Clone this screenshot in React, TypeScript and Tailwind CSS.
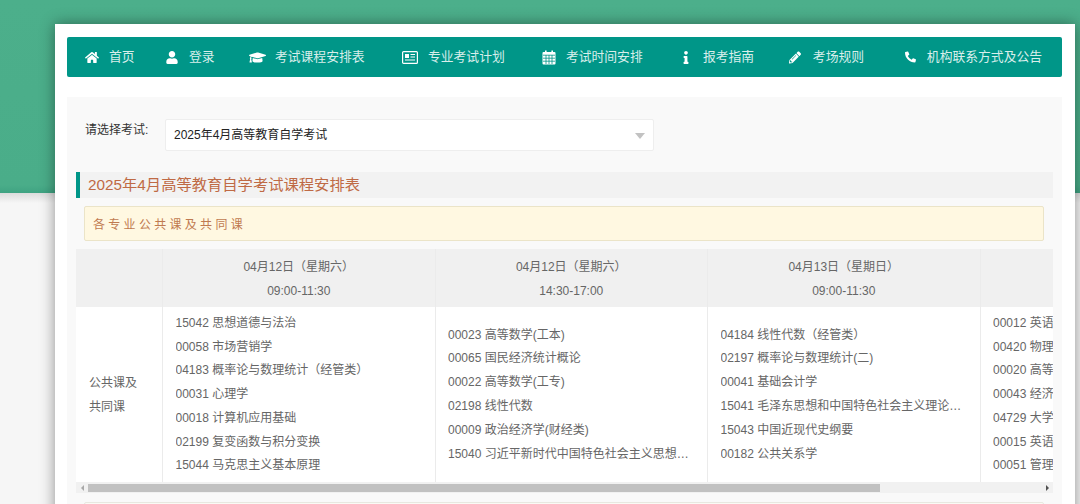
import { FaHome, FaUser, FaGraduationCap, FaInfo, FaPencilAlt, FaPhoneAlt } from 'react-icons/fa'

const font = 'font-["Liberation_Sans","Noto_Sans_CJK_SC",sans-serif]'

function NewspaperIcon() {
  return (
    <svg width="16" height="13" viewBox="0 0 16 13" fill="none" aria-hidden="true">
      <rect x="0.6" y="0.6" width="14.8" height="11.8" rx="1" stroke="#fff" strokeWidth="1.2" />
      <rect x="3" y="3" width="4" height="4" fill="#fff" />
      <path d="M8.5 3.5h4.5M8.5 6h4.5M3 9h10" stroke="#fff" strokeWidth="1.1" />
    </svg>
  )
}

function CalendarIcon() {
  return (
    <svg width="14" height="15" viewBox="0 0 14 15" fill="none" aria-hidden="true">
      <path d="M3 0.5h1.6v2H3zM9.4 0.5H11v2H9.4z" fill="#fff" />
      <rect x="0.5" y="2" width="13" height="12.5" rx="1" fill="#fff" />
      <path d="M1 5.2h12M1 8.2h12M1 11.2h12M4 5v9M7 5v9M10 5v9" stroke="#009688" strokeWidth="0.8" />
    </svg>
  )
}

const navItems = [
  { label: '首页', icon: <FaHome className="w-[14px] h-[13px]" />, cls: 'ml-0 gap-[10px]' },
  { label: '登录', icon: <FaUser className="w-[12px] h-[13px]" />, cls: 'ml-[31.4px] gap-[11px]' },
  { label: '考试课程安排表', icon: <FaGraduationCap className="w-[17px] h-[15px]" />, cls: 'ml-[34.4px] gap-[9px]' },
  { label: '专业考试计划', icon: <NewspaperIcon />, cls: 'ml-[37.4px] gap-[10px]' },
  { label: '考试时间安排', icon: <CalendarIcon />, cls: 'ml-[37.2px] gap-[10px]' },
  { label: '报考指南', icon: <FaInfo className="w-[6px] h-[13px]" />, cls: 'ml-[40.2px] gap-[14px]' },
  { label: '考场规则', icon: <FaPencilAlt className="w-[12px] h-[13px]" />, cls: 'ml-[34.8px] gap-[12px]' },
  { label: '机构联系方式及公告', icon: <FaPhoneAlt className="w-[11px] h-[12px]" />, cls: 'ml-[40.8px] gap-[11px]' },
]

const columns = [
  {
    date: '04月12日（星期六）',
    time: '09:00-11:30',
    courses: ['15042 思想道德与法治', '00058 市场营销学', '04183 概率论与数理统计（经管类）', '00031 心理学', '00018 计算机应用基础', '02199 复变函数与积分变换', '15044 马克思主义基本原理'],
  },
  {
    date: '04月12日（星期六）',
    time: '14:30-17:00',
    courses: ['00023 高等数学(工本)', '00065 国民经济统计概论', '00022 高等数学(工专)', '02198 线性代数', '00009 政治经济学(财经类)', '15040 习近平新时代中国特色社会主义思想概论'],
  },
  {
    date: '04月13日（星期日）',
    time: '09:00-11:30',
    courses: ['04184 线性代数（经管类）', '02197 概率论与数理统计(二)', '00041 基础会计学', '15041 毛泽东思想和中国特色社会主义理论体系概论', '15043 中国近现代史纲要', '00182 公共关系学'],
  },
  {
    date: '04月13日（星期日）',
    time: '14:30-17:00',
    courses: ['00012 英语(一)', '00420 物理(工)', '00020 高等数学(一)', '00043 经济法概论(财经类)', '04729 大学语文', '00015 英语(二)', '00051 管理系统中计算机应用'],
  },
]

export default function App() {
  return (
    <div className={`${font} w-[1080px] h-[504px] overflow-hidden bg-[linear-gradient(#4caf8b_0,#4aad89_185px,#3fa382_193px,#dcdcdc_193px,#f6f6f6_203px)] pt-[24px]`}>
      <div className="ml-[55px] w-[1020px] h-[500px] bg-white shadow-[0_0_14px_rgba(0,0,0,0.42)] pl-[12px] pr-[13px] pt-[13px]">
        <nav className="flex items-center h-[40px] bg-[#009688] rounded-[2px] pl-[18px] text-[12.8px] text-[#d8eeeb]">
          {navItems.map(item => (
            <a key={item.label} className={`flex items-center whitespace-nowrap ${item.cls}`}>
              <span className="text-white">{item.icon}</span>
              <span>{item.label}</span>
            </a>
          ))}
        </nav>

        <div className="mt-[20px] h-[420px] bg-[#f9f9f9] px-[9px] pt-[22px]">
          <div className="flex items-start pl-[9px]">
            <label className="text-[12px] leading-[22px] w-[80px] text-[#333] whitespace-nowrap">请选择考试:</label>
            <div className="relative flex items-center w-[489px] h-[32px] bg-white border border-[#eeeeee] rounded-[2px] pl-[8px] text-[12px] text-[#222]">
              2025年4月高等教育自学考试
              <span className="absolute right-[8px] top-[13px] border-x-[5px] border-t-[6px] border-x-transparent border-t-[#c2c2c2]" />
            </div>
          </div>

          <h2 className="mt-[21px] h-[26px] border-l-[4px] border-[#009688] bg-[#f2f2f2] pl-[8px] text-[15.3px] leading-[26px] font-normal text-[#bf6a45] whitespace-nowrap">
            2025年4月高等教育自学考试课程安排表
          </h2>

          <div className="mt-[8px] ml-[8px] mr-[9px] h-[35px] bg-[#fff8e1] border border-[#ebe4c8] rounded-[2px] pl-[8px] pt-[2px] text-[12px] leading-[33px] tracking-[3.3px] text-[#bf7a50]">
            各专业公共课及共同课
          </div>

          <div className="mt-[8px] overflow-hidden">
            <div className="flex w-[1180px] text-[12px] text-[#666]">
              <div className="w-[87px] shrink-0 border-r border-[#ebebeb] flex flex-col">
                <div className="h-[58px] bg-[#f0f0f0]" />
                <div className="h-[175px] bg-white flex items-center pl-[13px] leading-[24px]">
                  <span>公共课及<br />共同课</span>
                </div>
              </div>
              {columns.map(col => (
                <div key={col.date + col.time} className="w-[272.5px] shrink-0 border-r border-[#ebebeb] flex flex-col">
                  <div className="h-[58px] bg-[#f0f0f0] pt-[1px] flex flex-col items-center justify-center leading-[24px]">
                    <span>{col.date}</span>
                    <span>{col.time}</span>
                  </div>
                  <ul className="h-[175px] bg-white flex flex-col justify-center px-[12.5px] pt-[1px] leading-[23.8px]">
                    {col.courses.map(c => (
                      <li key={c} className="truncate">{c}</li>
                    ))}
                  </ul>
                </div>
              ))}
            </div>
            <div className="flex items-center h-[11px] bg-[#f1f1f1]">
              <span className="w-[12px] flex justify-center">
                <span className="border-y-[3px] border-r-[3px] border-y-transparent border-r-[#a8a8a8]" />
              </span>
              <span className="w-[792px] h-[8px] bg-[#c1c1c1]" />
              <span className="ml-auto w-[12px] flex justify-center">
                <span className="border-y-[3px] border-l-[3px] border-y-transparent border-l-[#505050]" />
              </span>
            </div>
          </div>

          <div className="mt-[9px] ml-[8px] mr-[9px] h-[20px] bg-[#fafaf5] border border-[#e8e8e0] rounded-[2px]" />
        </div>
      </div>
    </div>
  )
}
